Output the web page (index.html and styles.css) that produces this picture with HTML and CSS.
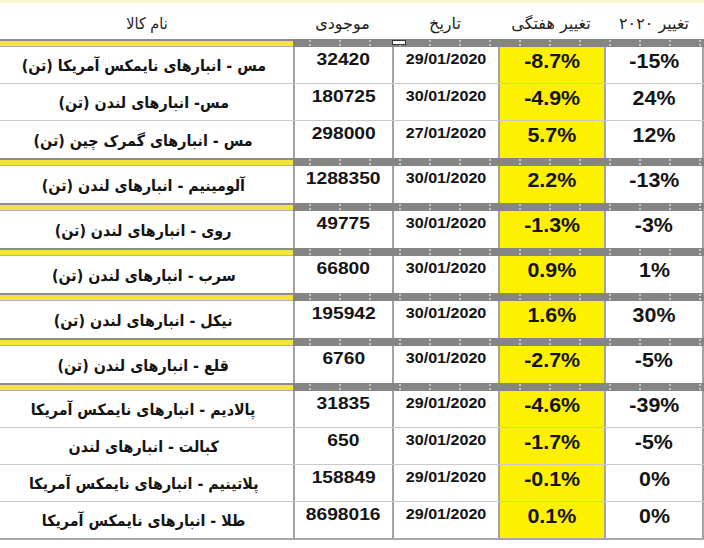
FILE: index.html
```html
<!DOCTYPE html>
<html lang="fa">
<head>
<meta charset="utf-8">
<title>موجودی انبارها</title>
<link rel="stylesheet" href="styles.css">
</head>
<body>
<div class="sheet">
  <div class="row head">
    <div class="cell title"><span class="fa">نام کالا</span></div>
    <div class="cell"><span class="fa">موجودی</span></div>
    <div class="cell"><span class="fa">تاریخ</span></div>
    <div class="cell"><span class="fa">تغییر هفتگی</span></div>
    <div class="cell"><span class="fa">تغییر ۲۰۲۰</span></div>
  </div>
  <div class="sep"><div class="sep-y"></div><div class="sep-g"></div><span class="marker"></span></div>

  <div class="row"><div class="cell name"><span class="fa">مس - انبارهای نایمکس آمریکا (تن)</span></div><div class="cell stock"><span class="num">32420</span></div><div class="cell date"><span class="num">29/01/2020</span></div><div class="cell week"><span class="num">-8.7%</span></div><div class="cell year"><span class="num">-15%</span></div></div>
  <div class="row"><div class="cell name"><span class="fa">مس- انبارهای لندن (تن)</span></div><div class="cell stock"><span class="num">180725</span></div><div class="cell date"><span class="num">30/01/2020</span></div><div class="cell week"><span class="num">-4.9%</span></div><div class="cell year"><span class="num">24%</span></div></div>
  <div class="row last"><div class="cell name"><span class="fa">مس - انبارهای گمرک چین (تن)</span></div><div class="cell stock"><span class="num">298000</span></div><div class="cell date"><span class="num">27/01/2020</span></div><div class="cell week"><span class="num">5.7%</span></div><div class="cell year"><span class="num">12%</span></div></div>
  <div class="sep"><div class="sep-y"></div><div class="sep-g"></div></div>

  <div class="row last"><div class="cell name"><span class="fa">آلومینیم - انبارهای لندن (تن)</span></div><div class="cell stock"><span class="num">1288350</span></div><div class="cell date"><span class="num">30/01/2020</span></div><div class="cell week"><span class="num">2.2%</span></div><div class="cell year"><span class="num">-13%</span></div></div>
  <div class="sep"><div class="sep-y"></div><div class="sep-g"></div></div>

  <div class="row last"><div class="cell name"><span class="fa">روی - انبارهای لندن (تن)</span></div><div class="cell stock"><span class="num">49775</span></div><div class="cell date"><span class="num">30/01/2020</span></div><div class="cell week"><span class="num">-1.3%</span></div><div class="cell year"><span class="num">-3%</span></div></div>
  <div class="sep"><div class="sep-y"></div><div class="sep-g"></div></div>

  <div class="row last"><div class="cell name"><span class="fa">سرب - انبارهای لندن (تن)</span></div><div class="cell stock"><span class="num">66800</span></div><div class="cell date"><span class="num">30/01/2020</span></div><div class="cell week"><span class="num">0.9%</span></div><div class="cell year"><span class="num">1%</span></div></div>
  <div class="sep"><div class="sep-y"></div><div class="sep-g"></div></div>

  <div class="row last"><div class="cell name"><span class="fa">نیکل - انبارهای لندن (تن)</span></div><div class="cell stock"><span class="num">195942</span></div><div class="cell date"><span class="num">30/01/2020</span></div><div class="cell week"><span class="num">1.6%</span></div><div class="cell year"><span class="num">30%</span></div></div>
  <div class="sep"><div class="sep-y"></div><div class="sep-g"></div></div>

  <div class="row last"><div class="cell name"><span class="fa">قلع - انبارهای لندن (تن)</span></div><div class="cell stock"><span class="num">6760</span></div><div class="cell date"><span class="num">30/01/2020</span></div><div class="cell week"><span class="num">-2.7%</span></div><div class="cell year"><span class="num">-5%</span></div></div>
  <div class="sep"><div class="sep-y"></div><div class="sep-g"></div></div>

  <div class="row"><div class="cell name"><span class="fa">پالادیم - انبارهای نایمکس آمریکا</span></div><div class="cell stock"><span class="num">31835</span></div><div class="cell date"><span class="num">29/01/2020</span></div><div class="cell week"><span class="num">-4.6%</span></div><div class="cell year"><span class="num">-39%</span></div></div>
  <div class="row"><div class="cell name"><span class="fa">کبالت - انبارهای لندن</span></div><div class="cell stock"><span class="num">650</span></div><div class="cell date"><span class="num">30/01/2020</span></div><div class="cell week"><span class="num">-1.7%</span></div><div class="cell year"><span class="num">-5%</span></div></div>
  <div class="row"><div class="cell name"><span class="fa">پلاتینیم - انبارهای نایمکس آمریکا</span></div><div class="cell stock"><span class="num">158849</span></div><div class="cell date"><span class="num">29/01/2020</span></div><div class="cell week"><span class="num">-0.1%</span></div><div class="cell year"><span class="num">0%</span></div></div>
  <div class="row end"><div class="cell name"><span class="fa">طلا - انبارهای نایمکس آمریکا</span></div><div class="cell stock"><span class="num">8698016</span></div><div class="cell date"><span class="num">29/01/2020</span></div><div class="cell week"><span class="num">0.1%</span></div><div class="cell year"><span class="num">0%</span></div></div>
</div>
</body>
</html>
```

FILE: styles.css
```css
* { box-sizing: border-box; }
html, body { margin: 0; padding: 0; background: #ffffff; }
body { width: 704px; height: 548px; overflow: hidden; font-family: "DejaVu Sans", "Liberation Sans", sans-serif; color: #141414; }

.sheet { position: relative; width: 704px; display: flex; flex-direction: column; }

.row {
  display: grid;
  grid-template-columns: 293px 99px 106px 106px 100px;
  height: 37px;
  border-bottom: 1px solid #c9c9c9;
}
.row.last { border-bottom: none; }
.row.end { border-bottom: 2px solid #a8a8a8; height: 38px; }

.cell {
  display: flex;
  justify-content: center;
  align-items: center;
  border-left: 2px solid #a3a3a3;
  overflow: visible;
  white-space: nowrap;
}
.cell:first-child { border-left: none; }
.cell:last-child { border-right: 2px solid #a3a3a3; }

.head {
  height: 39px;
  border-bottom: none;
  background: linear-gradient(#fbf6cf 0, #fbf6cf 3px, #ffffff 3px);
}
.head .cell { border-left: none; border-right: none; padding-top: 7px; }
.head .fa { font-size: 16px; font-weight: normal; color: #1e1e1e; }
.head .title .fa { transform: scaleX(0.9); }

.fa { display: inline-block; direction: rtl; unicode-bidi: embed; }
.name { padding-right: 6px; }
.name .fa { font-size: 15.5px; font-weight: bold; padding-top: 2px; transform: scaleX(0.92); }

.num {
  display: inline-block;
  font-family: "Liberation Sans", Arial, sans-serif;
  font-weight: bold;
}
.stock { align-items: flex-start; padding-top: 4px; }
.stock .num { font-size: 16px; transform: scaleX(1.2); }
.date { align-items: flex-start; padding-top: 4px; }
.date .num { font-size: 14px; transform: scaleX(1.15); }
.week { background: #fdf000; align-items: flex-start; padding-top: 3px; }
.week .num, .year .num { font-size: 20px; transform: scaleX(1.07); }
.year { align-items: flex-start; padding-top: 3px; }

.sep {
  position: relative;
  display: grid;
  grid-template-columns: 293px 411px;
  height: 8px;
}
.sep-y {
  border-top: 2px solid #8d8d8d;
  border-bottom: 1px solid #b3b3b3;
  background: #f2e43a;
}
.sep-g {
  background-color: #858585;
  background-image: radial-gradient(circle, #c4c4c4 0.8px, transparent 1.2px);
  background-size: 30px 4px;
  background-position: 2px 0;
}
.marker {
  position: absolute;
  left: 392px;
  top: 1px;
  width: 14px;
  height: 5px;
  background: #ffffff;
  border: 1px solid #333333;
}
```
